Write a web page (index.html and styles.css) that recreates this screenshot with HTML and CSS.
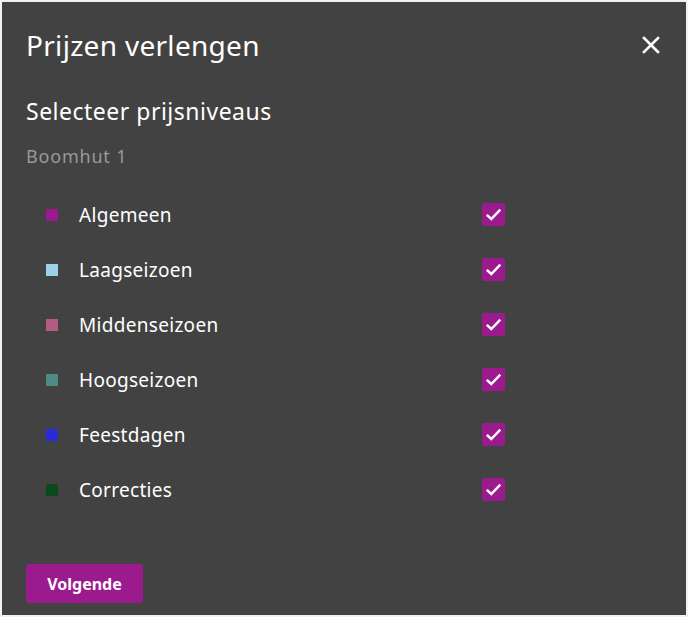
FILE: index.html
```html
<!DOCTYPE html>
<html lang="nl">
<head>
<meta charset="utf-8">
<title>Prijzen verlengen</title>
<link rel="stylesheet" href="styles.css">
</head>
<body>
<div class="dialog">
  <header class="head">
    <h1 class="title">Prijzen verlengen</h1>
    <button class="close" aria-label="Sluiten">
      <svg width="18" height="18" viewBox="0 0 18 18"><path d="M2 2L16 16M16 2L2 16" stroke="#fff" stroke-width="2.6" stroke-linecap="square"/></svg>
    </button>
  </header>
  <h2 class="subtitle">Selecteer prijsniveaus</h2>
  <div class="unit">Boomhut 1</div>
  <ul class="levels">
    <li class="level"><span class="swatch c1"></span><span class="name">Algemeen</span><span class="check"><svg width="23" height="23" viewBox="0 0 23 23"><path d="M4.8 11.8L9.3 16L18.3 6.6" fill="none" stroke="#fff" stroke-width="2.5"/></svg></span></li>
    <li class="level"><span class="swatch c2"></span><span class="name">Laagseizoen</span><span class="check"><svg width="23" height="23" viewBox="0 0 23 23"><path d="M4.8 11.8L9.3 16L18.3 6.6" fill="none" stroke="#fff" stroke-width="2.5"/></svg></span></li>
    <li class="level"><span class="swatch c3"></span><span class="name">Middenseizoen</span><span class="check"><svg width="23" height="23" viewBox="0 0 23 23"><path d="M4.8 11.8L9.3 16L18.3 6.6" fill="none" stroke="#fff" stroke-width="2.5"/></svg></span></li>
    <li class="level"><span class="swatch c4"></span><span class="name">Hoogseizoen</span><span class="check"><svg width="23" height="23" viewBox="0 0 23 23"><path d="M4.8 11.8L9.3 16L18.3 6.6" fill="none" stroke="#fff" stroke-width="2.5"/></svg></span></li>
    <li class="level"><span class="swatch c5"></span><span class="name">Feestdagen</span><span class="check"><svg width="23" height="23" viewBox="0 0 23 23"><path d="M4.8 11.8L9.3 16L18.3 6.6" fill="none" stroke="#fff" stroke-width="2.5"/></svg></span></li>
    <li class="level"><span class="swatch c6"></span><span class="name">Correcties</span><span class="check"><svg width="23" height="23" viewBox="0 0 23 23"><path d="M4.8 11.8L9.3 16L18.3 6.6" fill="none" stroke="#fff" stroke-width="2.5"/></svg></span></li>
  </ul>
  <div class="foot">
    <button class="next">Volgende</button>
  </div>
</div>
</body>
</html>
```
FILE: styles.css
```css
html, body {
  margin: 0;
  padding: 0;
  background: #f2f2f2;
}
body {
  padding: 2px;
  font-family: "Noto Sans", "Lato", sans-serif;
}
.dialog {
  box-sizing: border-box;
  width: 684px;
  height: 613px;
  background: #424242;
  color: #fff;
  padding: 0 26px 0 24px;
  display: flex;
  flex-direction: column;
}
.head {
  display: flex;
  align-items: center;
  justify-content: space-between;
  height: 86px;
}
.title {
  margin: 0;
  font-weight: 400;
  font-size: 28px;
  letter-spacing: 0.3px;
  line-height: 1;
}
.close {
  background: none;
  border: 0;
  padding: 0;
  width: 18px;
  height: 18px;
  display: flex;
  cursor: pointer;
}
.subtitle {
  margin: 7px 0 0;
  font-weight: 400;
  font-size: 23px;
  letter-spacing: 0.5px;
  line-height: 32px;
}
.unit {
  margin-top: 17px;
  color: #999;
  font-size: 18px;
  letter-spacing: 0.8px;
  line-height: 24px;
}
.levels {
  list-style: none;
  margin: 35px 0 0;
  padding: 0 0 0 20px;
  display: flex;
  flex-direction: column;
  gap: 32px;
}
.level {
  display: flex;
  align-items: center;
  height: 23px;
}
.swatch {
  width: 12px;
  height: 12px;
  flex: none;
}
.name {
  margin-left: 21px;
  font-size: 19px;
  letter-spacing: 0.3px;
  width: 403px;
}
.check {
  width: 23px;
  height: 23px;
  border-radius: 2px;
  background: #9b1a8e;
  display: flex;
}
.c1 { background: #9b1a8e; }
.c2 { background: #9dd1ea; }
.c3 { background: #b45a84; }
.c4 { background: #4e8a86; }
.c5 { background: #2a2ad8; }
.c6 { background: #0c4a1b; }
.foot {
  margin-top: auto;
  padding-bottom: 12px;
}
.next {
  width: 117px;
  height: 39px;
  border: 0;
  border-radius: 4px;
  background: #9b1a8e;
  color: #fff;
  font-family: "Noto Sans", "Lato", sans-serif;
  font-weight: 700;
  font-size: 16px;
  padding: 0;
  cursor: pointer;
}
```
